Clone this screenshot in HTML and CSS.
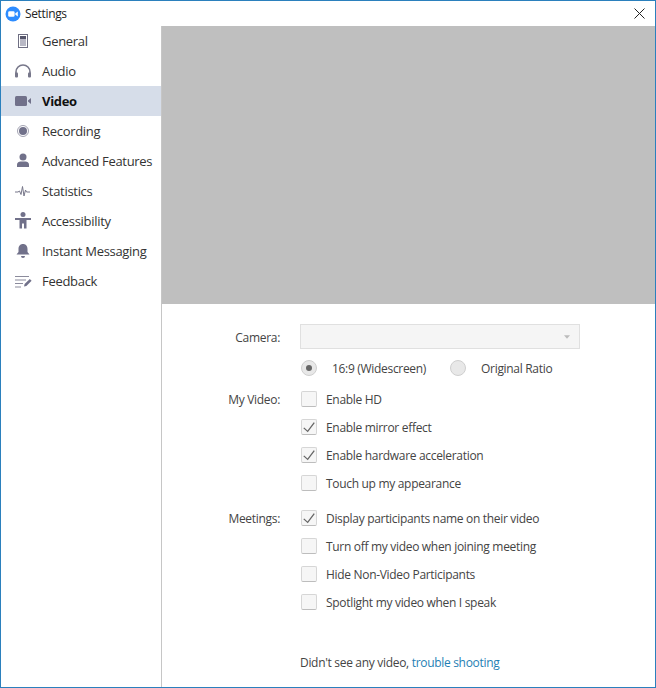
FILE: index.html
```html
<!DOCTYPE html>
<html lang="en">
<head>
<meta charset="utf-8">
<title>Settings</title>
<link rel="stylesheet" href="styles.css">
</head>
<body>
<div class="window">
  <header class="titlebar">
    <svg class="logo" viewBox="0 0 16 16"><circle cx="8" cy="8" r="7.5" fill="#2d8cff"/><rect x="3.2" y="5.2" width="6.4" height="5.6" rx="1.3" fill="#fff"/><path d="M10.2 7.4l2.6-1.800v4.800l-2.600-1.800z" fill="#fff"/></svg>
    <span class="title">Settings</span>
    <svg class="close" viewBox="0 0 11 11"><path d="M.5.5l10 10M10.500.5l-10 10" stroke="#222" stroke-width="1" fill="none"/></svg>
  </header>
  <div class="main">
    <nav class="sidebar">
      <div class="nav-item"><span class="nav-icon"><svg width="20" height="20" viewBox="0 0 20 20"><rect x="5.500" y="3.500" width="9" height="13" fill="#fff" stroke="#6f6f83"/><rect x="7" y="5" width="6" height="3" fill="#55556a"/><rect x="7" y="8" width="6" height="7" fill="#b9b9c6"/></svg></span>General</div>
      <div class="nav-item"><span class="nav-icon"><svg width="20" height="20" viewBox="0 0 20 20"><path d="M3 15v-4a7 7 0 0 1 14 0v4" fill="none" stroke="#77778a" stroke-width="1.600"/><rect x="2" y="11.500" width="3" height="5" rx="1" fill="#77778a"/><rect x="15" y="11.500" width="3" height="5" rx="1" fill="#77778a"/></svg></span>Audio</div>
      <div class="nav-item active"><span class="nav-icon"><svg width="20" height="20" viewBox="0 0 20 20"><rect x="2" y="5" width="12" height="10" rx="1.500" fill="#71718a"/><path d="M15 9.500l3-2.500v6l-3-2.500z" fill="#71718a"/></svg></span>Video</div>
      <div class="nav-item"><span class="nav-icon"><svg width="20" height="20" viewBox="0 0 20 20"><circle cx="10" cy="10" r="5.500" fill="none" stroke="#a3a3b2"/><circle cx="10" cy="10" r="4" fill="#71718a"/></svg></span>Recording</div>
      <div class="nav-item"><span class="nav-icon"><svg width="20" height="20" viewBox="0 0 20 20"><circle cx="10" cy="6" r="3.500" fill="#71718a"/><path d="M4 16v-2.500c0-2 2-3 3.500-3h5c1.500 0 3.500 1 3.500 3V16z" fill="#71718a"/></svg></span>Advanced Features</div>
      <div class="nav-item"><span class="nav-icon"><svg width="20" height="20" viewBox="0 0 20 20"><path d="M2 11h3l1.500-1 1.500 3.500 1.500-8 1.500 9.500 1.500-6 1 2h3.500" fill="none" stroke="#77778a"/></svg></span>Statistics</div>
      <div class="nav-item"><span class="nav-icon"><svg width="20" height="20" viewBox="0 0 20 20"><circle cx="10" cy="3.500" r="2.500" fill="#71718a"/><path d="M2 7h16v2h-4.500v8.500h-2.500v-5h-2v5H6.500V9H2z" fill="#71718a"/></svg></span>Accessibility</div>
      <div class="nav-item"><span class="nav-icon"><svg width="20" height="20" viewBox="0 0 20 20"><path d="M10 3c3 0 4.500 2.300 4.500 5v3l2 2.500h-13l2-2.500V8c0-2.700 1.500-5 4.500-5z" fill="#71718a"/><path d="M8 15h4a2 2 0 0 1-4 0z" fill="#71718a"/></svg></span>Instant Messaging</div>
      <div class="nav-item"><span class="nav-icon"><svg width="20" height="20" viewBox="0 0 20 20"><path d="M2 5.500h14M2 9h11M2 12.500h8M2 16h6" stroke="#8b8b9c" fill="none"/><path d="M11 15.500l.6-2.400 5.200-5.200 1.800 1.800-5.200 5.200z" fill="#71718a"/></svg></span>Feedback</div>
    </nav>
    <section class="content">
      <div class="preview"></div>
      <div class="form">
        <div class="row row-camera">
          <span class="label">Camera:</span>
          <div class="select"><svg class="caret" viewBox="0 0 7 4"><path d="M0 0h7L3.500 4z" fill="#bbb"/></svg></div>
        </div>
        <div class="row row-radio">
          <span class="label"></span>
          <span class="radio checked"></span><span class="radio-text first">16:9 (Widescreen)</span>
          <span class="radio"></span><span class="radio-text">Original Ratio</span>
        </div>
        <div class="group group-video">
          <div class="row check-row"><span class="label">My Video:</span><span class="box"></span><span>Enable HD</span></div>
          <div class="row check-row"><span class="label"></span><span class="box"><svg viewBox="0 0 16 16"><path d="M2 9l4.500 4L14 3" fill="none" stroke="#666" stroke-width="1.500"/></svg></span><span>Enable mirror effect</span></div>
          <div class="row check-row"><span class="label"></span><span class="box"><svg viewBox="0 0 16 16"><path d="M2 9l4.500 4L14 3" fill="none" stroke="#666" stroke-width="1.500"/></svg></span><span>Enable hardware acceleration</span></div>
          <div class="row check-row"><span class="label"></span><span class="box"></span><span>Touch up my appearance</span></div>
        </div>
        <div class="group group-meetings">
          <div class="row check-row"><span class="label">Meetings:</span><span class="box"><svg viewBox="0 0 16 16"><path d="M2 9l4.500 4L14 3" fill="none" stroke="#666" stroke-width="1.500"/></svg></span><span>Display participants name on their video</span></div>
          <div class="row check-row"><span class="label"></span><span class="box"></span><span>Turn off my video when joining meeting</span></div>
          <div class="row check-row"><span class="label"></span><span class="box"></span><span>Hide Non-Video Participants</span></div>
          <div class="row check-row"><span class="label"></span><span class="box"></span><span>Spotlight my video when I speak</span></div>
        </div>
        <p class="help">Didn't see any video, <a href="#">trouble shooting</a></p>
      </div>
    </section>
  </div>
</div>
</body>
</html>
```
FILE: styles.css
```css
* { box-sizing: border-box; }
html, body { margin: 0; padding: 0; }
body { width: 656px; height: 688px; overflow: hidden; background: #fff; font-family: "Open Sans", "Noto Sans", sans-serif; color: #333; }
.window { width: 656px; height: 688px; border: 1px solid #2b80bd; display: flex; flex-direction: column; background: #fff; }
.titlebar { height: 25px; flex: none; display: flex; align-items: center; padding-left: 4px; padding-right: 10px; }
.logo { width: 16px; height: 16px; margin-right: 4px; }
.title { font-size: 12px; letter-spacing: -0.35px; color: #222; flex: 1; }
.close { width: 11px; height: 11px; }
.main { flex: 1; display: flex; min-height: 0; }
.sidebar { width: 161px; flex: none; border-right: 1px solid #c6c6c6; }
.nav-item { height: 30px; display: flex; align-items: center; font-size: 13px; letter-spacing: -0.3px; color: #333; padding-left: 12px; }
.nav-icon { width: 20px; height: 20px; margin-right: 9px; display: flex; }
.nav-item.active { background: #d6dde9; font-weight: 700; color: #111; }
.content { flex: 1; display: flex; flex-direction: column; min-width: 0; }
.preview { height: 278px; flex: none; background: #bfbfbf; }
.form { flex: 1; padding-top: 20px; font-size: 12px; letter-spacing: -0.31px; color: #444; }
.row { display: flex; align-items: center; }
.label { width: 118px; margin-right: 20px; text-align: right; flex: none; color: #444; }
.row-camera { height: 25px; }
.row-camera .label { padding-top: 2px; }
.select { width: 280px; height: 25px; border: 1px solid #e0e0e0; background: #f5f5f5; display: flex; align-items: center; justify-content: flex-end; padding-right: 9px; }
.caret { width: 6px; height: 4px; }
.row-radio { height: 28px; margin-top: 5px; }
.radio { width: 16px; height: 16px; border-radius: 50%; border: 1px solid #cfcfcf; background: #e8e8e8; flex: none; display: flex; align-items: center; justify-content: center; margin-left: 1px; }
.radio.checked::after { content: ""; width: 6px; height: 6px; border-radius: 50%; background: #666; }
.radio-text { margin-left: 15px; }
.radio-text.first { margin-right: 23px; }
.group-video { margin-top: 3px; }
.group-meetings { margin-top: 7px; }
.check-row { height: 28px; }
.box { width: 16px; height: 16px; margin-left: 1px; margin-right: 9px; flex: none; border: 1px solid #d6d6d6; border-bottom-color: #bdbdbd; border-radius: 2px; background: #f6f6f6; display: flex; }
.box svg { width: 100%; height: 100%; }
.help { margin: 38px 0 0 138px; line-height: 18px; }
.help a { color: #1f7fb4; text-decoration: none; }
```
